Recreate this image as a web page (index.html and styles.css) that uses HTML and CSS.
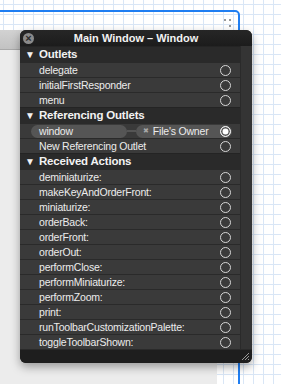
FILE: index.html
```html
<!DOCTYPE html>
<html lang="en">
<head>
    <meta charset="UTF-8">
    <title>Main Window - Window</title>
    <link rel="stylesheet" href="styles.css">
</head>
<body>
    <div class="canvas">
        <div class="selection">
            <span class="grip-dots">
                <i></i><i></i><i></i>
            </span>
        </div>
        <div class="bg-window">
            <div class="bg-toolbar"></div>
        </div>

        <div class="hud">
            <div class="hud-title">
                <span class="close-btn">×</span>
                <span>Main Window – Window</span>
            </div>

            <div class="hud-body">
                <div class="list">
                    <div class="section">Outlets</div>
                    <div class="row"><span>delegate</span><span class="port"></span></div>
                    <div class="row"><span>initialFirstResponder</span><span class="port"></span></div>
                    <div class="row"><span>menu</span><span class="port"></span></div>

                    <div class="section">Referencing Outlets</div>
                    <div class="row row-link">
                        <span class="pill pill-left">window</span>
                        <span class="wire"></span>
                        <span class="pill pill-right">
                            <span class="unlink">✖</span>
                            <span>File's Owner</span>
                            <span class="port port-on"></span>
                        </span>
                    </div>
                    <div class="row"><span>New Referencing Outlet</span><span class="port"></span></div>

                    <div class="section">Received Actions</div>
                    <div class="row"><span>deminiaturize:</span><span class="port"></span></div>
                    <div class="row"><span>makeKeyAndOrderFront:</span><span class="port"></span></div>
                    <div class="row"><span>miniaturize:</span><span class="port"></span></div>
                    <div class="row"><span>orderBack:</span><span class="port"></span></div>
                    <div class="row"><span>orderFront:</span><span class="port"></span></div>
                    <div class="row"><span>orderOut:</span><span class="port"></span></div>
                    <div class="row"><span>performClose:</span><span class="port"></span></div>
                    <div class="row"><span>performMiniaturize:</span><span class="port"></span></div>
                    <div class="row"><span>performZoom:</span><span class="port"></span></div>
                    <div class="row"><span>print:</span><span class="port"></span></div>
                    <div class="row"><span>runToolbarCustomizationPalette:</span><span class="port"></span></div>
                    <div class="row"><span>toggleToolbarShown:</span><span class="port"></span></div>
                </div>
                <div class="scroller"></div>
            </div>

            <div class="hud-footer">
                <svg class="resize" viewBox="0 0 10 10">
                    <path d="M9 2 L2 9 M9 5 L5 9 M9 8 L8 9" stroke="#9a9a9a" stroke-width="1"/>
                </svg>
            </div>
        </div>
    </div>
</body>
</html>
```

FILE: styles.css
```css
* {
    box-sizing: border-box;
}

body {
    margin: 0;
    font-family: "Liberation Sans", Arial, sans-serif;
}

.canvas {
    position: relative;
    width: 281px;
    height: 384px;
    overflow: hidden;
    background-color: #fff;
    background-image:
        linear-gradient(to right, #d9e6f6 1px, transparent 1px),
        linear-gradient(to bottom, #d9e6f6 1px, transparent 1px);
    background-size: 10px 10px;
    background-position: 3px 4px;
}

.selection {
    position: absolute;
    left: -10px;
    top: 10px;
    width: 250px;
    height: 400px;
    border: 2px solid #1f7ef2;
    border-top-right-radius: 5px;
}

.grip-dots i {
    position: absolute;
    width: 2px;
    height: 2px;
    background: #777;
    border-radius: 1px;
}
.grip-dots i:nth-child(1) { left: 232px; top: 7px; }
.grip-dots i:nth-child(2) { left: 237px; top: 7px; }
.grip-dots i:nth-child(3) { left: 237px; top: 13px; }

.bg-window {
    position: absolute;
    left: 0;
    top: 30px;
    width: 217px;
    height: 360px;
    background: #ececec;
}

.bg-toolbar {
    height: 20px;
    background: linear-gradient(#d2d2d2, #c2c2c2);
    border-bottom: 1px solid #a9a9a9;
}

.hud {
    position: absolute;
    left: 20px;
    top: 30px;
    width: 232px;
    height: 333px;
    background: #202020;
    border-radius: 6px;
    overflow: hidden;
    box-shadow: 0 4px 10px rgba(0,0,0,0.35);
    color: #f2f2f2;
}

.hud-title {
    position: relative;
    height: 16px;
    background: linear-gradient(#262626, #1c1c1c);
    font-size: 11px;
    font-weight: bold;
    text-align: center;
    line-height: 16px;
}

.close-btn {
    position: absolute;
    left: 3px;
    top: 3px;
    width: 11px;
    height: 11px;
    border-radius: 50%;
    background: #8a8a8a;
    color: #2a2a2a;
    font-size: 11px;
    line-height: 10px;
    text-align: center;
}

.hud-body {
    display: flex;
}

.list {
    width: 220px;
}

.scroller {
    flex: 1;
    background: #343434;
    border-left: 1px solid #2a2a2a;
}

.section {
    height: 16px;
    padding-left: 5px;
    background: #2a2a2a;
    border-top: 1px solid #242424;
    font-size: 11.5px;
    font-weight: bold;
    letter-spacing: -0.2px;
    line-height: 15px;
}

.section::before {
    content: "▼";
    display: inline-block;
    width: 14px;
    font-size: 10px;
}

.row {
    display: flex;
    align-items: center;
    justify-content: space-between;
    height: 15px;
    padding: 0 9px 0 19px;
    background: #3a3a3a;
    border-top: 1px solid #2a2a2a;
    font-size: 10.5px;
    letter-spacing: -0.2px;
    color: #ececec;
}

.port {
    width: 11px;
    height: 11px;
    border: 1.5px solid #d6d6d6;
    border-radius: 50%;
}

.row-link {
    padding: 0 0 0 11px;
    justify-content: flex-start;
}

.pill {
    display: flex;
    align-items: center;
    height: 13px;
    border-radius: 7px;
    background: #555;
}

.pill-left {
    width: 96px;
    padding-left: 8px;
}

.wire {
    width: 9px;
    height: 2px;
    background: #555;
}

.pill-right {
    width: 96px;
    padding: 0 1px 0 7px;
    gap: 4px;
}

.pill-right .port {
    margin-left: auto;
}

.unlink {
    font-size: 7px;
    color: #a8a8a8;
}

.port-on {
    background: #fff;
    box-shadow: inset 0 0 0 1.5px #555;
    border-color: #f0f0f0;
}

.hud-footer {
    position: relative;
    height: 14px;
    background: #1e1e1e;
    border-top: 1px solid #2a2a2a;
}

.resize {
    position: absolute;
    right: 2px;
    bottom: 2px;
    width: 10px;
    height: 10px;
}
```
